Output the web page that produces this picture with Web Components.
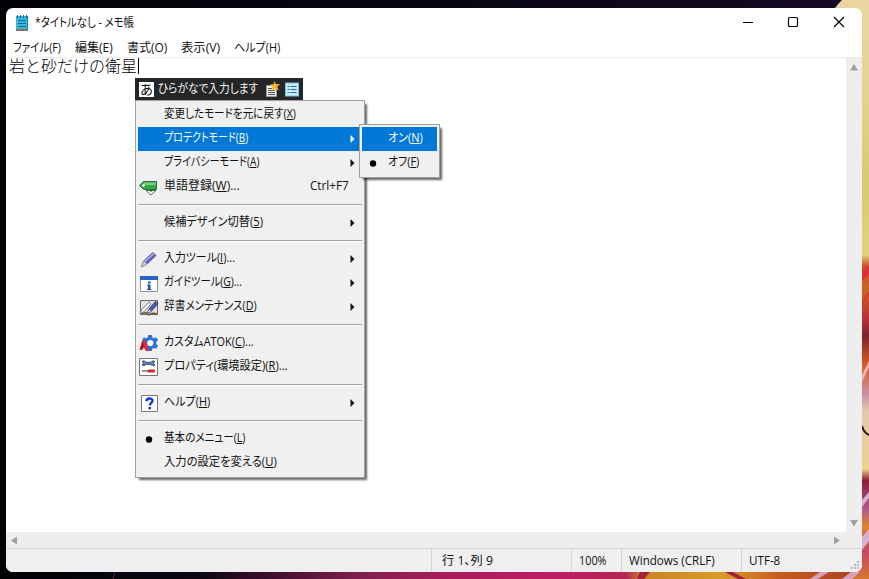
<!DOCTYPE html>
<html lang="ja">
<head>
<meta charset="utf-8">
<title>*タイトルなし - メモ帳</title>
<style>
  html, body {
    margin: 0;
    width: 869px;
    height: 579px;
    overflow: hidden;
    font: 12px/16px "Open Sans", "Noto Sans CJK JP", sans-serif;
    color: #111;
  }
</style>
</head>
<body>
<desk-top>
  <notepad-window>
    <fit-text slot="title" w="99">*タイトルなし - メモ帳</fit-text>
    <fit-text slot="menu" w="48">ファイル(F)</fit-text>
    <fit-text slot="menu" w="38">編集(E)</fit-text>
    <fit-text slot="menu" w="40">書式(O)</fit-text>
    <fit-text slot="menu" w="39">表示(V)</fit-text>
    <fit-text slot="menu" w="46">ヘルプ(H)</fit-text>
    <span slot="text">岩と砂だけの衛星</span>
    <fit-text slot="position" w="51">行 1、列 9</fit-text>
    <fit-text slot="zoom" w="28">100%</fit-text>
    <fit-text slot="eol" w="86">Windows (CRLF)</fit-text>
    <fit-text slot="encoding" w="31">UTF-8</fit-text>
  </notepad-window>

  <ime-bar slot="overlay"><fit-text w="100">ひらがなで入力します</fit-text></ime-bar>

  <popup-menu slot="overlay" style="left: 135px; top: 100px; width: 230px; height: 378px">
    <menu-item><fit-text w="132">変更したモードを元に戻す(<u>X</u>)</fit-text></menu-item>
    <menu-item selected arrow><fit-text w="84">プロテクトモード(<u>B</u>)</fit-text></menu-item>
    <menu-item arrow><fit-text w="95">プライバシーモード(<u>A</u>)</fit-text></menu-item>
    <menu-item icon="word"><fit-text w="76">単語登録(<u>W</u>)...</fit-text><fit-text slot="key" w="39">Ctrl+F7</fit-text></menu-item>
    <menu-line></menu-line>
    <menu-item arrow><fit-text w="99">候補デザイン切替(<u>5</u>)</fit-text></menu-item>
    <menu-line></menu-line>
    <menu-item arrow icon="pencil"><fit-text w="71">入力ツール(<u>I</u>)...</fit-text></menu-item>
    <menu-item arrow icon="guide"><fit-text w="78">ガイドツール(<u>G</u>)...</fit-text></menu-item>
    <menu-item arrow icon="dict"><fit-text w="93">辞書メンテナンス(<u>D</u>)</fit-text></menu-item>
    <menu-line></menu-line>
    <menu-item icon="gear"><fit-text w="90">カスタムATOK(<u>C</u>)...</fit-text></menu-item>
    <menu-item icon="tools"><fit-text w="124">プロパティ(環境設定)(<u>R</u>)...</fit-text></menu-item>
    <menu-line></menu-line>
    <menu-item arrow icon="help"><fit-text w="46">ヘルプ(<u>H</u>)</fit-text></menu-item>
    <menu-line></menu-line>
    <menu-item icon="dot"><fit-text w="81">基本のメニュー(<u>L</u>)</fit-text></menu-item>
    <menu-item><fit-text w="113">入力の設定を変える(<u>U</u>)</fit-text></menu-item>
  </popup-menu>

  <popup-menu slot="overlay" style="left: 359px; top: 124px; width: 81px; height: 54px">
    <menu-item selected><fit-text w="35">オン(<u>N</u>)</fit-text></menu-item>
    <menu-item icon="dot"><fit-text w="31">オフ(<u>F</u>)</fit-text></menu-item>
  </popup-menu>
</desk-top>

<script>
const icons = {
  word: `
    <path d="M4.5 3.500h13v8h-13L.5 7.500z" fill="#35a846" stroke="#3f6547"/>
    <path d="M5 4.500h12v2.500H4z" fill="#79cf7c"/>
    <circle cx="4.500" cy="7.500" r="1.200" fill="#fff"/>
    <path d="M7 12.500l5 4.500 5-4.500z" fill="#f8fff8" stroke="#55665a"/>
    <path d="M8 11h8l-4 3z" fill="#187e2c"/>`,
  pencil: `
    <path d="M2.500 17l2-6L14 2.500l3 3L8 14z" fill="#5d65bd" stroke="#3e438d" stroke-width=".8"/>
    <path d="M5 11l9-8 1.300 1.200-9 8z" fill="#a9aee8"/>
    <path d="M2.500 17l2-6L8 14z" fill="#d9d9e6" stroke="#8b8d9c" stroke-width=".6"/>`,
  guide: `
    <path d="M1.500 2.500h17v15h-17z" fill="#fff" stroke="#8a93a0"/>
    <path d="M1 2h18v4H1z" fill="#2864c5"/>
    <path d="M9 7.500h2.500v2H9zM8 10.500h3.500V15h1v1H8v-1h1v-3.500H8z" fill="#1b4bac"/>`,
  dict: `
    <path d="M1.500 2.500h17v14h-17z" fill="#e4dfda" stroke="#76615a"/>
    <path d="M2 16c3-2 6-1 8 1 2-2 5-2 8-1" fill="none" stroke="#6b5147" stroke-width="1.400"/>
    <path d="M1 16l1.500-4L10 4l2 2-7.500 8z" fill="#fafafa" stroke="#777"/>
    <path d="M8.500 15l1.500-4 6.500-7.500 2.500 2-7 8z" fill="#5260bd" stroke="#28347c"/>
    <path d="M8.500 15l1.500-4 2 2.500z" fill="#fff" stroke="#555" stroke-width=".5"/>`,
  gear: `
    <path d="M9.200 1h3.600l.5 2.400 1.600.8 2.300-.9 1.800 3-1.800 1.700v2l1.800 1.700-1.800 3-2.300-.8-1.600.9-.5 2.200H9.200l-.5-2.200-1.600-.9-2.300.8-1.800-3L4.800 10V8L3 6.300l1.800-3 2.300.9 1.600-.8z" fill="#2d71d5"/>
    <circle cx="11.300" cy="9" r="3.100" fill="#fff"/>
    <path d="M3.400 6.500h3.200L10 17H6.600L5 12l-2 4H.5z" fill="#e42b38"/>
    <path d="M3.400 6.500L1 15H.5L3 16l2-4z" fill="#a61b31"/>`,
  tools: `
    <path d="M.5.5h18v17H.5z" fill="#fff" stroke="#777"/>
    <path d="M3 3.500l2 1.500-2 2c1.500 1 3 .7 4-.6h5c1 1.300 2.500 1.600 4 .6l-2-2 2-1.500c-1.500-1-3-.7-4 .8H7c-1-1.500-2.500-1.800-4-.8z" fill="#6484b9" stroke="#334f83"/>
    <path d="M3 13h7" stroke="#555" stroke-width="1.200"/>
    <rect x="8.500" y="11.500" width="7.500" height="3" rx="1" fill="#c92f2f"/>`,
  help: `
    <path d="M2.500 1.500h16v16h-16z" fill="#fff" stroke="#777"/>
    <path d="M7.500 7.200c0-3.600 6-3.600 6-.4 0 2-2.700 2.100-2.700 4.600" fill="none" stroke="#1637dc" stroke-width="2.400"/>
    <path d="M9.500 13H12v2.300H9.500z" fill="#1637dc"/>`,
  dot: '<circle cx="10" cy="9.500" r="3.200" fill="#000"/>'
};

function define(name, html, setup) {
  const template = document.createElement('template');
  template.innerHTML = html;
  customElements.define(name, class extends HTMLElement {
    connectedCallback() {
      if (this.shadowRoot) return;
      const root = this.attachShadow({ mode: 'open' });
      root.appendChild(template.content.cloneNode(true));
      if (setup) setup(this, root);
    }
  });
}

define('desk-top', `
  <style>
    :host {
      display: block;
      position: relative;
      box-sizing: border-box;
      width: 869px;
      height: 579px;
      padding: 8px 7px 7px 6px;
      overflow: hidden;
      background: #03030a;
    }
    .wallpaper { position: absolute; left: 0; top: 0; }
  </style>
  <svg class="wallpaper" width="869" height="579">
    <defs>
      <linearGradient id="top"><stop offset="0" stop-color="#020207"/><stop offset=".5" stop-color="#080511"/><stop offset="1" stop-color="#160923"/></linearGradient>
      <linearGradient id="side" x2="0" y2="1">
        <stop offset="0" stop-color="#ead5a0"/><stop offset=".12" stop-color="#e5d698"/>
        <stop offset=".32" stop-color="#d8ca70"/><stop offset=".44" stop-color="#e2d37f"/>
        <stop offset=".46" stop-color="#c94b2c"/><stop offset=".5" stop-color="#cb6620"/>
        <stop offset=".55" stop-color="#b92e38"/><stop offset=".58" stop-color="#7c2431"/>
        <stop offset=".63" stop-color="#d75b23"/><stop offset=".68" stop-color="#c991a4"/>
        <stop offset=".71" stop-color="#e4c8af"/><stop offset=".81" stop-color="#ecd28d"/>
        <stop offset=".83" stop-color="#8b1c39"/><stop offset=".88" stop-color="#b15b8f"/>
        <stop offset=".91" stop-color="#df842a"/><stop offset=".95" stop-color="#c4446b"/>
        <stop offset="1" stop-color="#d4772c"/>
      </linearGradient>
      <linearGradient id="bottom">
        <stop offset="0" stop-color="#010103"/><stop offset=".23" stop-color="#0b0612"/>
        <stop offset=".32" stop-color="#431030"/><stop offset=".42" stop-color="#82204f"/>
        <stop offset=".5" stop-color="#a41c58"/><stop offset=".63" stop-color="#bd1e66"/>
        <stop offset=".72" stop-color="#b52555"/><stop offset=".74" stop-color="#c88424"/>
        <stop offset=".83" stop-color="#d89b28"/><stop offset=".9" stop-color="#c65a1f"/>
        <stop offset="1" stop-color="#a43d24"/>
      </linearGradient>
    </defs>
    <path d="M0 0h869v12H0z" fill="url(#top)"/>
    <path d="M0 568h869v11H0z" fill="url(#bottom)"/>
    <path d="M840 0h29v579h-17V20l-20-12z" fill="url(#side)"/>
    <path d="M830 0h12l-3 3-4 5h-5z" fill="#160923"/>
    <path d="M862 272l7-6v8l-7 7zM862 302l7-10v3l-7 10z" fill="#d92f38"/>
    <path d="M862 375l7-14v6l-7 15z" fill="#efb3b4"/>
    <path d="M862 426q2 7 7 9" fill="none" stroke="#25121a" stroke-width="2"/>
    <path d="M862 500l7-8v6l-7 9zM862 537l7-8v12l-7 9z" fill="#dab0d2"/>
    <path d="M113 579l2-7" stroke="#5b2036"/>
    <path d="M725 572l13 7h8l-13-7zM640 572h10l-6 7h-7z" fill="#a6203d"/>
    <path d="M810 579l10-7h9l-11 7zM842 579l9-7h9l-8 7z" fill="#d7a0bd"/>
  </svg>
  <slot></slot>
  <slot name="overlay"></slot>
`);

define('notepad-window', `
  <style>
    :host {
      display: grid;
      grid-template-rows: 30px 19px 1fr 16px 24px;
      position: relative;
      height: 564px;
      border-radius: 7px;
      overflow: hidden;
      background: #fff;
    }
    header { display: grid; grid-template-columns: 29px 1fr auto; align-items: center; padding-right: 13px; }
    header svg { display: block; }
    .logo { margin-left: 8px; }
    .buttons { display: flex; gap: 26px; }
    nav { display: flex; gap: 14px; padding: 2px 7px 0; line-height: 16px; box-sizing: border-box; }
    .body { display: grid; grid-template-columns: 1fr 16px; border-top: 1px solid #ededed; min-height: 0; }
    .page { display: flex; align-items: flex-start; padding-left: 3px; font: 300 16px/17px "Liberation Sans", "Noto Sans CJK JP", sans-serif; color: #000; }
    .caret { width: 1px; height: 16px; background: #000; margin-left: 1px; }
    .vbar, .hbar { display: flex; justify-content: space-between; background: #eeeeef; }
    .vbar { flex-direction: column; align-items: center; padding: 6px 0 5px; }
    .hbar { align-items: center; padding: 0 21px 0 4px; }
    footer { display: grid; grid-template-columns: 425px 140px 50px 120px 1fr; background: #efefef; border-top: 1px solid #d7d7d7; position: relative; }
    footer div { padding: 4px 0 0 7px; border-left: 1px solid #d6d6d6; }
    footer div:first-child { border: 0; }
    footer .pos { padding-left: 10px; }
    .grip { position: absolute; right: 2px; bottom: 2px; }
  </style>
  <header>
    <svg class="logo" width="16" height="18" viewBox="0 0 16 18">
      <path d="M2 2h12v14H2z" fill="#37b7dd"/>
      <path d="M2 15h12v2H2z" fill="#8a6f60"/>
      <path d="M13 2h1v14h-1z" fill="#1587af"/>
      <path d="M4 6.500h8M4 9.500h8M4 12.500h8" stroke="#126d94"/>
      <path d="M3.500 1v3M6.500 1v3M9.500 1v3M12.500 1v3" stroke="#25627b"/>
    </svg>
    <slot name="title"></slot>
    <div class="buttons">
      <svg width="20" height="20"><path d="M6 9.500h10" stroke="#000"/></svg>
      <svg width="20" height="20"><rect x="5.500" y="4.500" width="9" height="9" rx="1" fill="none" stroke="#000" stroke-width="1.200"/></svg>
      <svg width="20" height="20"><path d="M5 4l10 10M15 4L5 14" stroke="#000" stroke-width="1.200"/></svg>
    </div>
  </header>
  <nav><slot name="menu"></slot></nav>
  <div class="body">
    <div class="page"><slot name="text"></slot><i class="caret"></i></div>
    <div class="vbar">
      <svg width="8" height="7"><path d="M4 0l4 6.500H0z" fill="#a0a0a0"/></svg>
      <svg width="8" height="7"><path d="M0 0h8L4 6.500z" fill="#a0a0a0"/></svg>
    </div>
  </div>
  <div class="hbar">
    <svg width="8" height="9"><path d="M7 .5v8L1 4.500z" fill="#a0a0a0"/></svg>
    <svg width="8" height="9"><path d="M1 .5v8l6-4z" fill="#a0a0a0"/></svg>
  </div>
  <footer>
    <div></div>
    <div class="pos"><slot name="position"></slot></div>
    <div><slot name="zoom"></slot></div>
    <div><slot name="eol"></slot></div>
    <div><slot name="encoding"></slot></div>
    <svg class="grip" width="9" height="9" fill="#b5bab8"><path d="M6 0h2v2H6zM3 3h2v2H3zM6 3h2v2H6zM0 6h2v2H0zM3 6h2v2H3zM6 6h2v2H6z"/></svg>
  </footer>
`);

// Squeezes its line of text to the given advance width.
define('fit-text', `
  <style>
    :host { display: inline-block; flex: none; height: 16px; line-height: 16px; white-space: nowrap; }
    span { display: inline-block; transform-origin: 0 50%; font-feature-settings: "palt"; }
    ::slotted(u) { text-decoration-thickness: 1px; text-underline-offset: 1px; }
  </style>
  <span><slot></slot></span>
`, (host, root) => {
  const span = root.querySelector('span');
  const width = Number(host.getAttribute('w'));
  requestAnimationFrame(() => {
    const scale = width / span.offsetWidth;
    host.style.width = width + 'px';
    span.style.transform = 'scaleX(' + scale + ')';
  });
});

define('ime-bar', `
  <style>
    :host {
      display: flex;
      align-items: center;
      position: absolute;
      left: 135px;
      top: 78px;
      box-sizing: border-box;
      width: 168px;
      height: 22px;
      padding-left: 4px;
      background: #252628;
      color: #f4f4f4;
    }
    .mode { width: 15px; height: 15px; margin-right: 4px; background: #fff; color: #000; font: 400 13px/14px "Noto Sans CJK JP", sans-serif; text-align: center; }
    .note { margin-left: 7px; }
    .list { margin-left: 5px; }
  </style>
  <div class="mode">あ</div>
  <slot></slot>
  <svg class="note" width="15" height="17" viewBox="0 0 15 17">
    <path d="M1.500 4.500h10v11h-10z" fill="#eee" stroke="#999"/>
    <path d="M3 7.500h4M3 9.500h7M3 11.500h7M3 13.500h7" stroke="#555"/>
    <path d="M9.500 0l1.400 3.300 4-.3-2.700 3 1.800 3.500-3.800-1.700L7 10l.6-3.900L5 3.500l3.500-.2z" fill="#f7b62c"/>
  </svg>
  <svg class="list" width="14" height="15" viewBox="0 0 14 15">
    <rect x=".5" y="1" width="13" height="13" fill="#c9edff" stroke="#75bee8"/>
    <path d="M2.500 4.500h2M2.500 7.500h2M2.500 10.500h2M5.500 4.500h6M5.500 7.500h6M5.500 10.500h6" stroke="#246ba2" stroke-width="1.200"/>
  </svg>
`);

define('popup-menu', `
  <style>
    :host {
      display: block;
      position: absolute;
      box-sizing: border-box;
      padding: 2px;
      border: 1px solid #a0a0a0;
      background: #f0f0f0;
      box-shadow: 3px 3px 2px -1px rgba(0, 0, 0, .6);
    }
  </style>
  <slot></slot>
`);

define('menu-item', `
  <style>
    :host { display: grid; grid-template-columns: 26px 1fr auto 12px; align-items: center; height: 24px; }
    :host([selected]) { background: #0078d7; color: #fff; }
    .icon { width: 20px; height: 18px; margin: -1px 0 0 1px; overflow: visible; }
    .text { height: 18px; }
    .key { margin-right: 1px; }
    .arrow { width: 5px; height: 8px; margin: -1px 0 0; fill: currentColor; }
    :host(:not([arrow])) .arrow { visibility: hidden; }
  </style>
  <svg class="icon"></svg>
  <div class="text"><slot></slot></div>
  <div class="text key"><slot name="key"></slot></div>
  <svg class="arrow" viewBox="0 0 5 8"><path d="M.5 0v8l4-4z"/></svg>
`, (host, root) => {
  root.querySelector('.icon').innerHTML = icons[host.getAttribute('icon')] || '';
});

define('menu-line', `
  <style>
    :host { display: block; box-sizing: border-box; height: 12px; padding-top: 5px; }
    i { display: block; height: 1px; background: #a0a0a0; border-bottom: 1px solid #fff; }
  </style>
  <i></i>
`);
</script>
</body>
</html>
